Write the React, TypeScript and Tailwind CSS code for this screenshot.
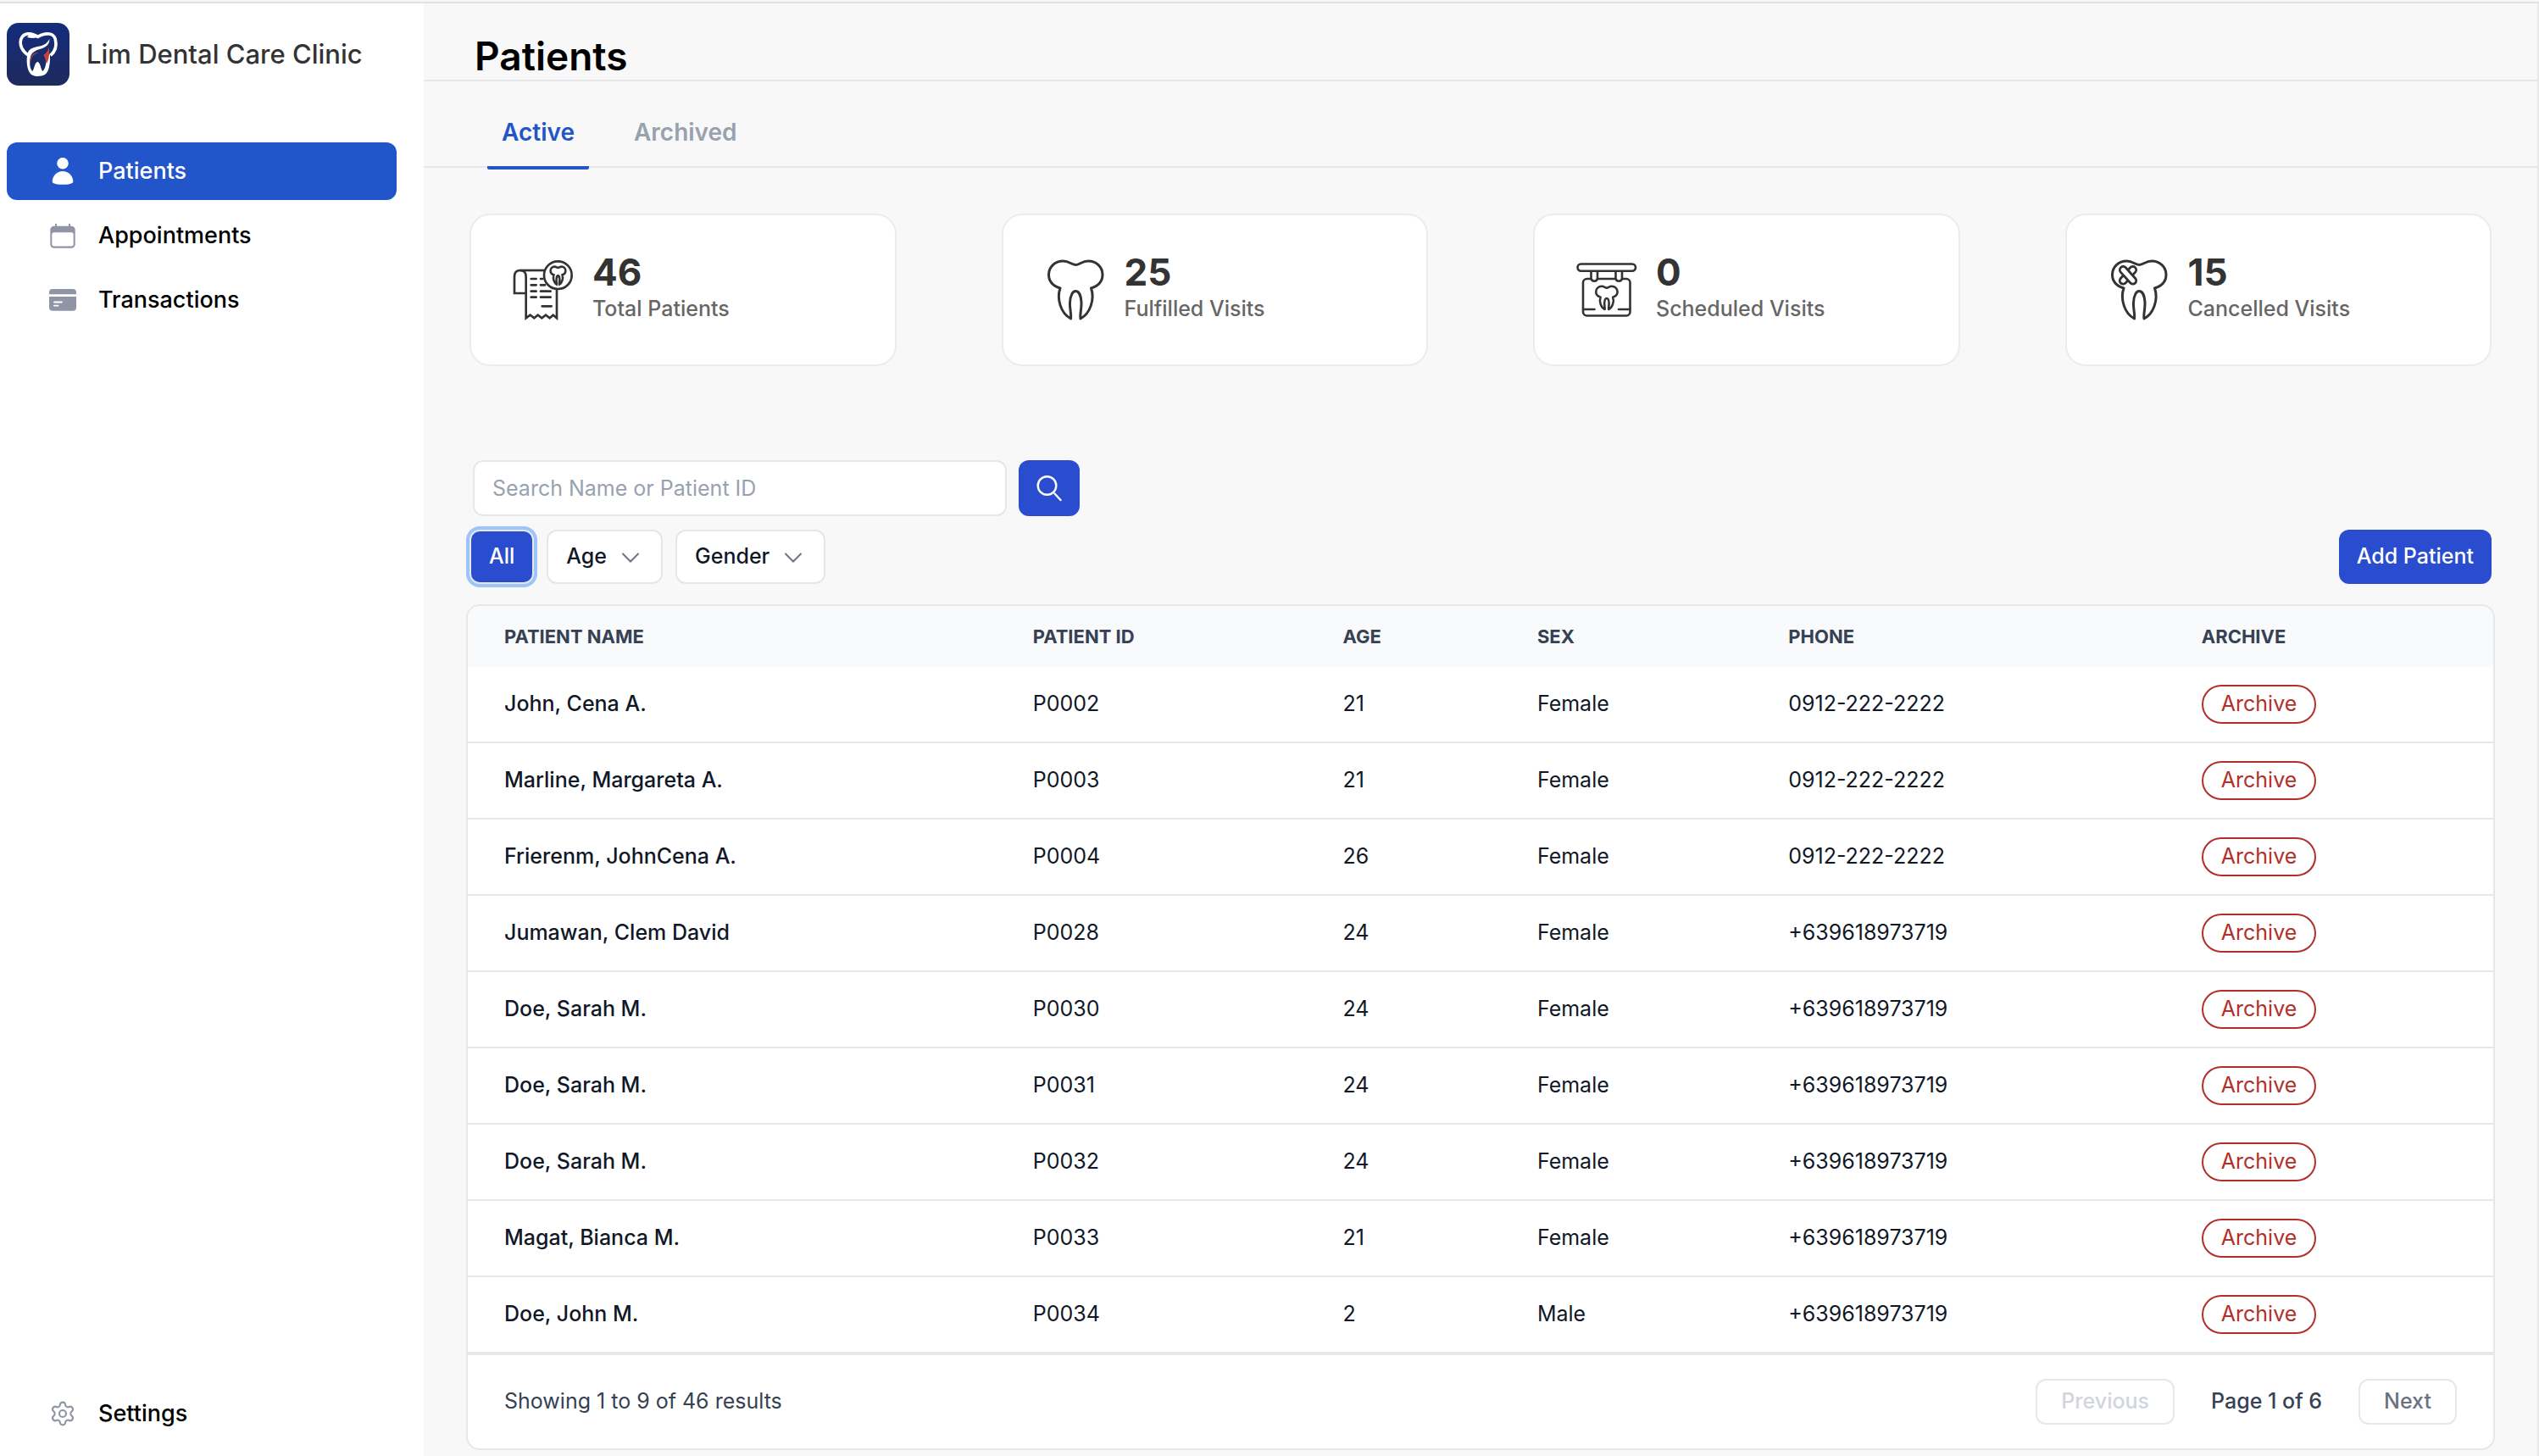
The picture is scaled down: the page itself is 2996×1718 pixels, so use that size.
import { ReactNode, useState } from 'react';
import { Settings } from 'lucide-react';

type Patient = {
    name: string;
    id: string;
    age: number;
    sex: string;
    phone: string;
};

type Stat = {
    value: number;
    label: string;
    icon: ReactNode;
};

const patients: Patient[] = [
    { name: 'John, Cena A.', id: 'P0002', age: 21, sex: 'Female', phone: '0912-222-2222' },
    { name: 'Marline, Margareta A.', id: 'P0003', age: 21, sex: 'Female', phone: '0912-222-2222' },
    { name: 'Frierenm, JohnCena A.', id: 'P0004', age: 26, sex: 'Female', phone: '0912-222-2222' },
    { name: 'Jumawan, Clem David', id: 'P0028', age: 24, sex: 'Female', phone: '+639618973719' },
    { name: 'Doe, Sarah M.', id: 'P0030', age: 24, sex: 'Female', phone: '+639618973719' },
    { name: 'Doe, Sarah M.', id: 'P0031', age: 24, sex: 'Female', phone: '+639618973719' },
    { name: 'Doe, Sarah M.', id: 'P0032', age: 24, sex: 'Female', phone: '+639618973719' },
    { name: 'Magat, Bianca M.', id: 'P0033', age: 21, sex: 'Female', phone: '+639618973719' },
    { name: 'Doe, John M.', id: 'P0034', age: 2, sex: 'Male', phone: '+639618973719' },
];

const TOOTH =
    'M36.2 6.5C31 6.5 29 2 21.5 2C12 2 4.5 9 4.5 18C4.5 26 10 31.5 18 34C13.5 47 19 64 30.5 70C31.5 65 29 58 29.5 51C30 42 33 37.5 36.2 37.5C39.5 37.5 42.5 42 43 51C43.4 58 41 65 42 70C53.5 64 59 47 54.5 34C62.5 31.5 68 26 68 18C68 9 60.5 2 51 2C43.5 2 41.5 6.5 36.2 6.5Z';

function Logo() {
    return (
        <svg viewBox="24 21 222 222" className="size-[74px] shrink-0 rounded-[14px]" aria-hidden="true">
            <defs>
                <linearGradient id="logoBg" x1="0" y1="0" x2="0" y2="1">
                    <stop offset="0" stopColor="#142c7c" />
                    <stop offset="1" stopColor="#1d2a5c" />
                </linearGradient>
            </defs>
            <rect x="24" y="21" width="222" height="222" fill="url(#logoBg)" />
            <path
                d="M98 134C80 122 67 100 75 77C84 56 108 54 134 70C164 53 190 57 196 79C202 104 193 124 179 136"
                fill="none"
                stroke="#fff"
                strokeWidth="11"
            />
            <path d="M108 56C120 56 130 64 142 67C128 78 112 76 96 72Z" fill="#fff" />
            <path
                d="M175 78C176 96 164 106 148 112C128 118 110 124 107 146C104 166 106 184 115 192C121 186 121 164 133 158C145 164 144 186 151 192C160 184 163 168 165 150L177 130C178 166 174 196 158 205C144 212 122 212 110 203C96 190 93 160 96 138C99 108 124 108 144 103C158 99 168 92 175 78Z"
                fill="#fff"
            />
            <path d="M106 170C104 150 106 128 137 125C130 130 116 132 112 144C109 152 108 162 106 170Z" fill="#c8403e" />
            <path d="M173 104C173 116 165 126 153 136C161 142 160 154 165 164C174 154 176 122 173 104Z" fill="#c8403e" />
        </svg>
    );
}

function ReceiptIcon() {
    return (
        <svg viewBox="18 18 216 216" className="size-[72px] shrink-0" fill="none" stroke="#333" strokeWidth="8" aria-hidden="true">
            <path d="M64 138H24V80C24 64 31 57 44 57C57 57 65 65 65 80V226L80 215L94 226L107 215L121 226L135 215L149 226L161 215L174 226V124" />
            <path d="M44 57H130" />
            <circle cx="178" cy="74" r="49" />
            <path
                d="M83 87H101M83 109H101M83 131H101M83 152H101M117 87H124M117 109H132M117 131H152M117 152H152M122 184H155"
                strokeLinecap="round"
            />
            <g transform="translate(148 42) scale(0.84 0.92)">
                <path d={TOOTH} strokeWidth="9" />
            </g>
        </svg>
    );
}

function ToothIcon() {
    return (
        <svg viewBox="0 0 72 72" className="size-[72px] shrink-0" fill="none" stroke="#333" strokeWidth="3" aria-hidden="true">
            <path d={TOOTH} strokeLinejoin="round" />
        </svg>
    );
}

function SignIcon() {
    return (
        <svg viewBox="0 0 72 72" className="size-[72px] shrink-0" fill="none" stroke="#333" strokeWidth="2.6" aria-hidden="true">
            <rect x="8" y="23" width="55.5" height="43.5" rx="4.5" />
            <path d="M9 59H21.5M50 59H63" strokeLinecap="round" />
            <path d="M17.5 13.5V22.5A3.8 3.8 0 0 0 25 22.5V13.5M46.5 13.5V22.5A3.8 3.8 0 0 0 54 22.5V13.5" fill="#fff" />
            <rect x="1.5" y="5.5" width="68.5" height="8.2" rx="4.1" fill="#fff" />
            <g transform="translate(21.4 31) scale(0.4)">
                <path d={TOOTH} strokeWidth="6.4" strokeLinejoin="round" />
            </g>
        </svg>
    );
}

function BandagedToothIcon() {
    return (
        <svg viewBox="0 0 72 72" className="size-[72px] shrink-0" fill="none" stroke="#333" strokeWidth="3" aria-hidden="true">
            <path d={TOOTH} strokeLinejoin="round" />
            <g strokeWidth="2.8" fill="#fff">
                <rect x="10.5" y="14.8" width="25" height="8" rx="4" transform="rotate(-48 23 18.8)" />
                <rect x="10.5" y="14.8" width="25" height="8" rx="4" transform="rotate(48 23 18.8)" />
            </g>
        </svg>
    );
}

function PersonIcon() {
    return (
        <svg viewBox="0 0 32 32" className="size-8" fill="#fff" aria-hidden="true">
            <circle cx="16" cy="6.7" r="6.8" />
            <path d="M16 16C22.5 16 28.3 21.5 28.3 28.4C28.3 30.5 22 31.8 16 31.8S3.7 30.5 3.7 28.4C3.7 21.5 9.5 16 16 16Z" />
        </svg>
    );
}

function CalendarIcon() {
    return (
        <svg viewBox="0 0 32 32" className="size-8" aria-hidden="true">
            <path d="M8 2V8M24 2V8" stroke="#8f95a7" strokeWidth="2" />
            <rect x="1.3" y="4.7" width="29.4" height="26" rx="4.5" fill="#8f95a7" />
            <rect x="3.3" y="12.3" width="25.4" height="16.2" rx="2.5" fill="#fff" />
        </svg>
    );
}

function CardIcon() {
    return (
        <svg viewBox="0 0 32 32" className="size-8" fill="#8f95a7" aria-hidden="true">
            <path d="M0 9.2V7A4 4 0 0 1 4 3H28A4 4 0 0 1 32 7V9.2Z" />
            <path d="M0 12H32V24.7A4 4 0 0 1 28 28.7H4A4 4 0 0 1 0 24.7Z" />
            <path d="M6 18.5H15M6 22.7H10.5" stroke="#fff" strokeWidth="1.8" strokeLinecap="round" />
        </svg>
    );
}

function SearchIcon() {
    return (
        <svg viewBox="0 0 32 32" className="size-8" fill="none" stroke="#fff" strokeWidth="2.4" strokeLinecap="round" aria-hidden="true">
            <circle cx="13.5" cy="13" r="10.8" />
            <path d="M22.5 22.5L29.5 30" />
        </svg>
    );
}

const stats: Stat[] = [
    { value: 46, label: 'Total Patients', icon: <ReceiptIcon /> },
    { value: 25, label: 'Fulfilled Visits', icon: <ToothIcon /> },
    { value: 0, label: 'Scheduled Visits', icon: <SignIcon /> },
    { value: 15, label: 'Cancelled Visits', icon: <BandagedToothIcon /> },
];

function NavItem({ label, icon, active = false }: { label: string; icon: ReactNode; active?: boolean }) {
    return (
        <a
            href="#"
            className={`flex h-[68px] items-center gap-[26px] rounded-xl pl-[50px] text-[27px] font-medium ${
                active ? 'bg-[#2255c9] text-white' : 'text-black'
            }`}
        >
            {icon}
            {label}
        </a>
    );
}

function Sidebar() {
    return (
        <aside className="flex w-[500px] shrink-0 flex-col border-t-2 border-[#e1e1e1] bg-white pr-8 pb-4 pl-2">
            <div className="flex items-center gap-5 pt-[23px]">
                <Logo />
                <span className="text-[31px] font-medium whitespace-nowrap text-[#333]">Lim Dental Care Clinic</span>
            </div>
            <nav className="mt-[67px] flex grow flex-col gap-2">
                <NavItem label="Patients" icon={<PersonIcon />} active />
                <NavItem label="Appointments" icon={<CalendarIcon />} />
                <NavItem label="Transactions" icon={<CardIcon />} />
            </nav>
            <NavItem label="Settings" icon={<Settings size={32} strokeWidth={1.6} color="#8f95a7" />} />
        </aside>
    );
}

function StatCard({ value, label, icon }: Stat) {
    return (
        <div className="flex h-[180px] items-center gap-[22px] rounded-3xl border-2 border-[#ececf0] bg-white pl-[49px]">
            {icon}
            <div>
                <div className="text-[44px] leading-[44px] font-bold text-[#333]">{value}</div>
                <div className="text-[25px] leading-[42px] font-medium text-[#666]">{label}</div>
            </div>
        </div>
    );
}

function FilterSelect({ label, options }: { label: string; options: string[] }) {
    return (
        <div className="relative">
            <select
                aria-label={label}
                className="field-sizing-content h-16 appearance-none rounded-xl border-2 border-gray-200 bg-white pr-[64px] pl-[21px] text-[25px] font-medium text-gray-900"
            >
                <option>{label}</option>
                {options.map(option => (
                    <option key={option}>{option}</option>
                ))}
            </select>
            <svg
                viewBox="0 0 20 12"
                className="pointer-events-none absolute top-[27px] right-7 h-3 w-5"
                fill="none"
                stroke="#6b7280"
                strokeWidth="2"
                strokeLinecap="round"
                aria-hidden="true"
            >
                <path d="M1 1.5L10 10.5L19 1.5" />
            </svg>
        </div>
    );
}

function PatientTable() {
    const th = 'h-[72px] bg-gray-50 px-[43px] text-left text-[22px] font-bold text-gray-700';
    const td = 'h-[90px] border-b-2 border-gray-200 px-[43px]';

    return (
        <div className="overflow-hidden rounded-2xl border-2 border-gray-200 bg-white">
            <table className="w-full table-fixed border-separate border-spacing-0 text-[25px] text-gray-900">
                <thead>
                    <tr>
                        <th className={`${th} w-[26.1%]`}>PATIENT NAME</th>
                        <th className={`${th} w-[15.3%]`}>PATIENT ID</th>
                        <th className={`${th} w-[9.6%]`}>AGE</th>
                        <th className={`${th} w-[12.4%]`}>SEX</th>
                        <th className={`${th} w-[20.4%]`}>PHONE</th>
                        <th className={`${th} w-[16.2%]`}>ARCHIVE</th>
                    </tr>
                </thead>
                <tbody>
                    {patients.map(patient => (
                        <tr key={patient.id}>
                            <td className={`${td} font-medium`}>{patient.name}</td>
                            <td className={td}>{patient.id}</td>
                            <td className={td}>{patient.age}</td>
                            <td className={td}>{patient.sex}</td>
                            <td className={td}>{patient.phone}</td>
                            <td className={td}>
                                <button type="button" className="flex h-[46px] items-center rounded-full border-2 border-[#b3302a] px-[21px] text-[#b3302a]">
                                    Archive
                                </button>
                            </td>
                        </tr>
                    ))}
                </tbody>
            </table>

            {/* Pagination */}
            <div className="flex items-center justify-between border-t-2 border-gray-200 px-[43px] py-7 text-[25px] text-gray-700">
                <span>Showing 1 to 9 of 46 results</span>
                <div className="flex items-center gap-[43px] font-medium">
                    <button type="button" disabled className="h-[54px] rounded-xl border-2 border-gray-200 px-7 text-gray-300">
                        Previous
                    </button>
                    <span>Page 1 of 6</span>
                    <button type="button" className="h-[54px] rounded-xl border-2 border-gray-200 px-7 text-gray-500">
                        Next
                    </button>
                </div>
            </div>
        </div>
    );
}

export default function App() {
    const [tab, setTab] = useState('Active');
    const [search, setSearch] = useState('');

    return (
        <div className="flex min-h-screen bg-[#f8f8f8] pt-[2px] font-['Inter',sans-serif]">
            <Sidebar />
            <main className="min-w-0 grow border-t-2 border-r-2 border-t-[#e1e1e1] border-r-[#e8e8e8]">
                <header className="flex h-[92px] items-end border-b-2 border-gray-200 pb-1 pl-[60px]">
                    <h1 className="text-[46px] leading-[48px] font-semibold text-black">Patients</h1>
                </header>

                {/* Tabs */}
                <div role="tablist" className="flex h-[102px] gap-9 border-b-2 border-gray-200 pl-[75px]">
                    {['Active', 'Archived'].map(name => (
                        <button
                            key={name}
                            type="button"
                            role="tab"
                            aria-selected={tab === name}
                            onClick={() => setTab(name)}
                            className={`-mb-1 border-b-4 px-[17px] pt-[22px] pb-[2px] text-[28px] font-semibold ${
                                tab === name ? 'rounded-xs border-[#2255c9] text-[#2255c9]' : 'border-transparent text-gray-400'
                            }`}
                        >
                            {name}
                        </button>
                    ))}
                </div>

                <div className="px-[50px] pt-[54px]">
                    <div className="grid grid-cols-4 gap-[124px] px-1">
                        {stats.map(stat => (
                            <StatCard key={stat.label} {...stat} />
                        ))}
                    </div>

                    {/* Search and filters */}
                    <form className="mt-[111px] flex gap-[14px] pl-2" onSubmit={e => e.preventDefault()}>
                        <input
                            type="text"
                            aria-label="Search Name or Patient ID"
                            placeholder="Search Name or Patient ID"
                            value={search}
                            onChange={e => setSearch(e.target.value)}
                            className="h-[66px] w-[630px] rounded-xl border-2 border-gray-200 bg-white px-[21px] text-[25px] placeholder:text-gray-400"
                        />
                        <button
                            type="submit"
                            aria-label="Search"
                            className="flex h-[66px] w-[72px] items-center justify-center rounded-xl bg-[#2a4dd0]"
                        >
                            <SearchIcon />
                        </button>
                    </form>
                    <div className="mt-4 flex items-center gap-[15px] px-1 text-[25px] font-medium">
                        <button type="button" className="h-16 rounded-xl border-2 border-gray-200 bg-[#2a4dd0] px-[21px] text-white ring-4 ring-[#9dc5fb]">
                            All
                        </button>
                        <FilterSelect label="Age" options={['0-17', '18-59', '60+']} />
                        <FilterSelect label="Gender" options={['Male', 'Female']} />
                        <button type="button" className="ml-auto h-16 rounded-xl bg-[#2a4dd0] px-[21px] text-white">
                            Add Patient
                        </button>
                    </div>

                    <div className="mt-6">
                        <PatientTable />
                    </div>
                </div>
            </main>
        </div>
    );
}
